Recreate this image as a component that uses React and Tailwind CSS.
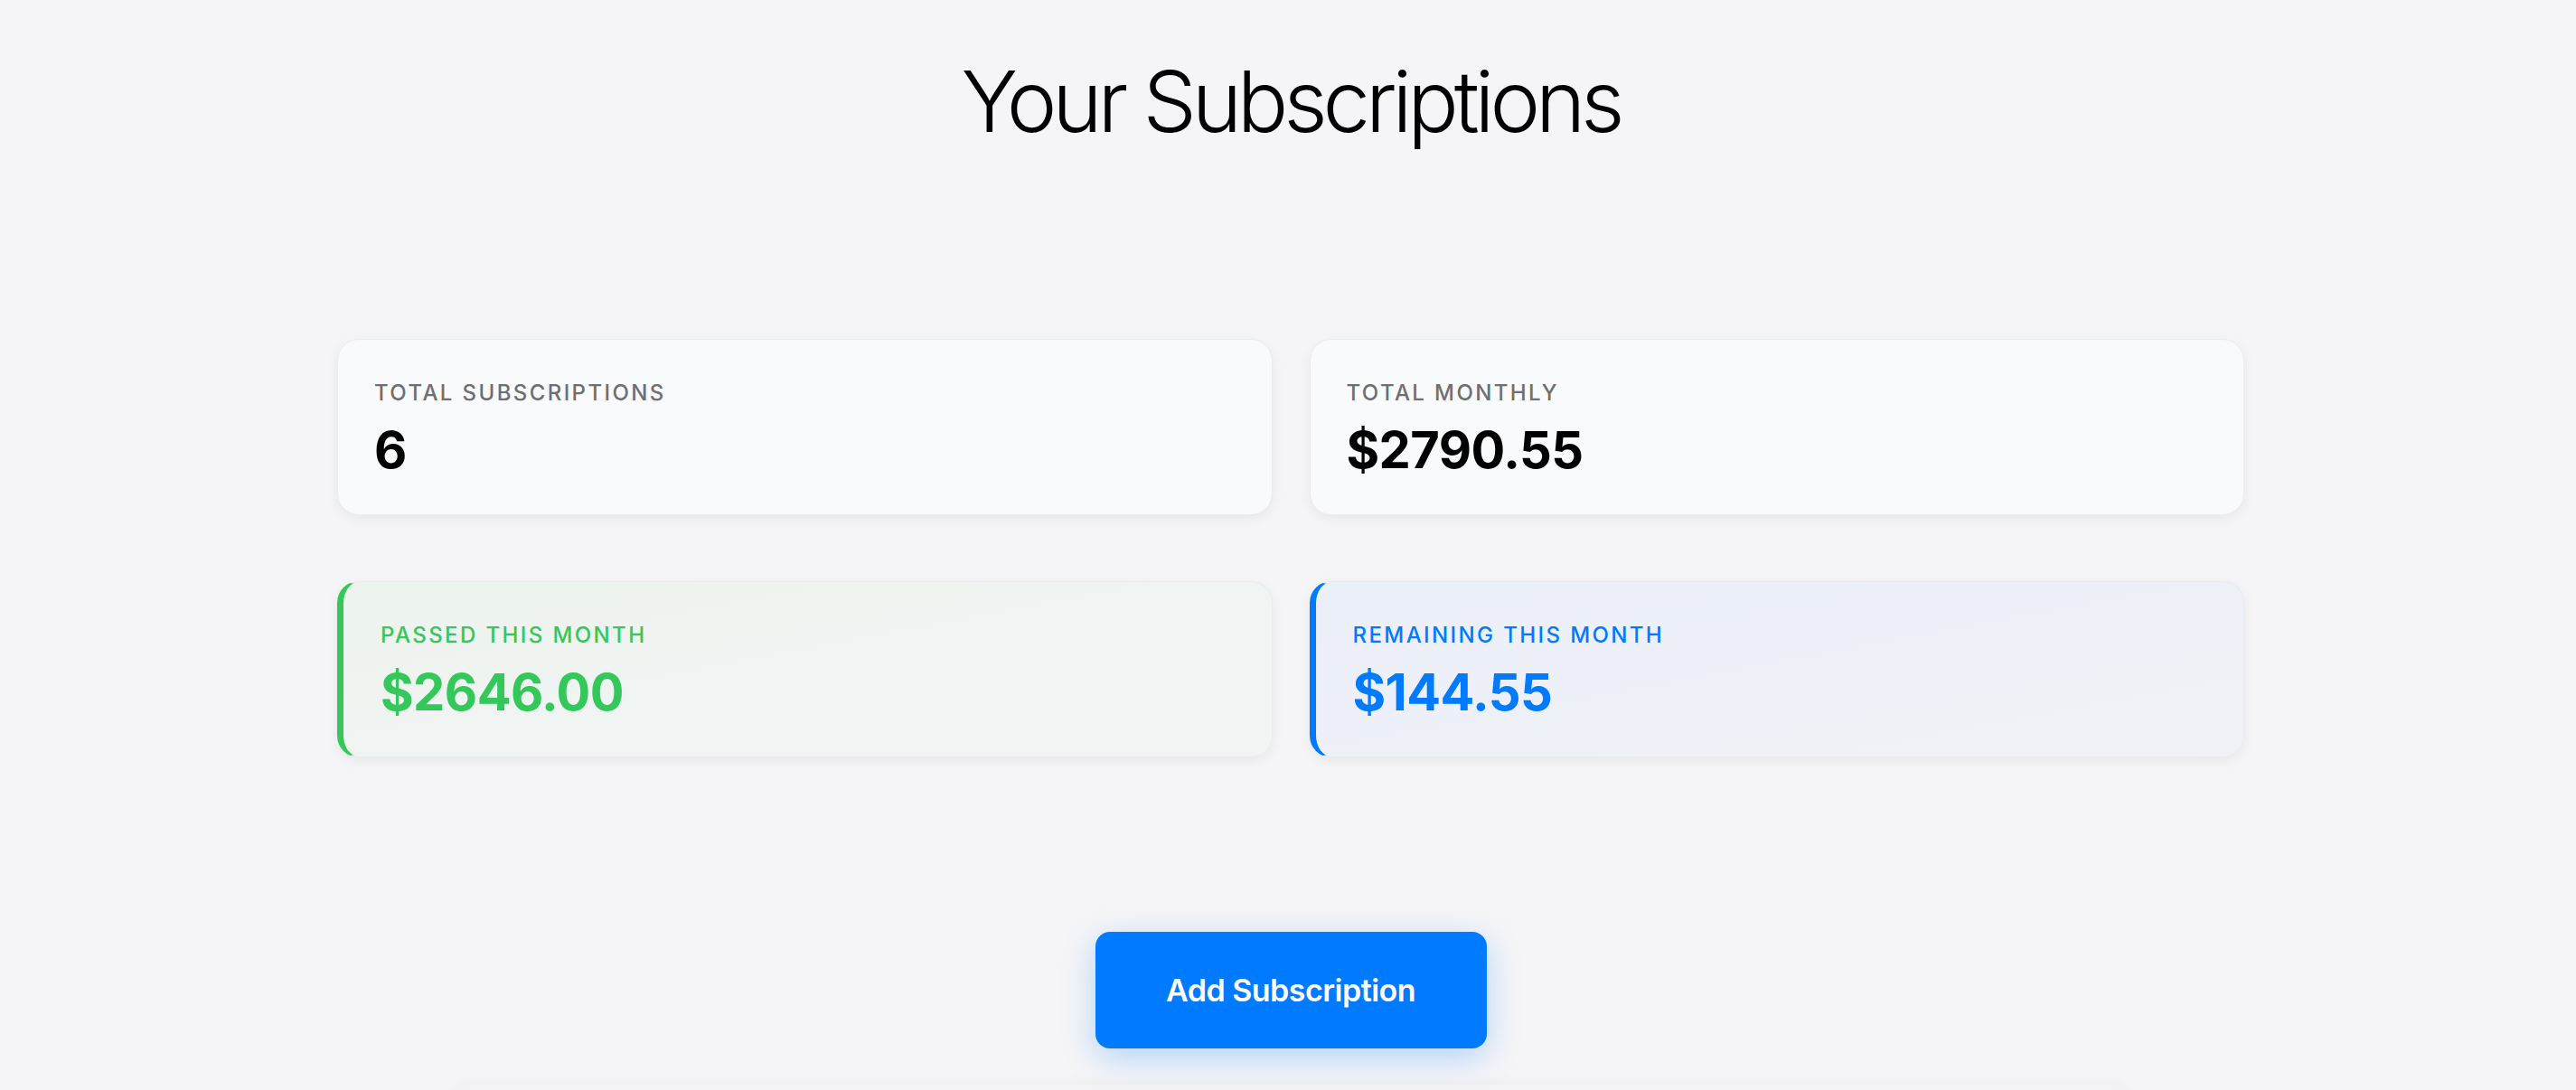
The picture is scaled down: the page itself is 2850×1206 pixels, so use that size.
import React from 'react';

const stats = [
  { label: 'Total Subscriptions', value: '6', tone: 'plain' },
  { label: 'Total Monthly', value: '$2790.55', tone: 'plain' },
  { label: 'Passed This Month', value: '$2646.00', tone: 'green' },
  { label: 'Remaining This Month', value: '$144.55', tone: 'blue' },
];

const toneStyles = {
  plain: {
    card: 'bg-[#f9fafb] border border-[#ececef] pl-10',
    label: 'text-[#6e6e73]',
    value: 'text-black',
  },
  green: {
    card: 'bg-gradient-to-br from-[#edf3ef] to-[#f2f4f4] border border-[#e9ecea] border-l-[7px] border-l-[#34c759] pl-[41px]',
    label: 'text-[#34c759]',
    value: 'text-[#34c759]',
  },
  blue: {
    card: 'bg-gradient-to-br from-[#ebeff9] to-[#f1f2f7] border border-[#e9eaef] border-l-[7px] border-l-[#007aff] pl-[41px]',
    label: 'text-[#007aff]',
    value: 'text-[#007aff]',
  },
};

function StatCard({ label, value, tone }) {
  const s = toneStyles[tone];
  return (
    <div className={`h-[195px] rounded-[24px] pt-[41px] pr-10 shadow-[0_4px_14px_rgba(0,0,0,0.06)] ${s.card}`}>
      <div className={`text-[24px] leading-[36px] font-medium uppercase tracking-[0.1em] ${s.label}`}>
        {label}
      </div>
      <div className={`mt-3 text-[56px] leading-[67px] font-bold tracking-[-0.01em] ${s.value}`}>
        {value}
      </div>
    </div>
  );
}

export default function App() {
  return (
    <div
      className="min-h-screen bg-[#f5f5f7] overflow-hidden pl-[6px]"
      style={{ fontFamily: 'Inter, "Noto Sans", sans-serif' }}
    >
      <h1 className="pt-[55px] text-center text-[94px] leading-[115px] font-light tracking-[-0.055em] text-black">
        Your Subscriptions
      </h1>

      <div className="mx-auto mt-[205px] w-[2110px] grid grid-cols-2 gap-x-[41px] gap-y-[73px]">
        {stats.map((s) => (
          <StatCard key={s.label} {...s} />
        ))}
      </div>

      <div className="mt-[193px] flex justify-center">
        <button className="w-[433px] h-[129px] rounded-[16px] bg-[#007aff] text-white text-[34px] font-semibold tracking-[-0.015em] shadow-[0_10px_36px_rgba(0,122,255,0.28)]">
          Add Subscription
        </button>
      </div>

      <div className="mx-auto mt-[40px] w-[1860px] h-[200px] rounded-[24px] bg-[#f3f3f5] shadow-[0_-4px_16px_rgba(0,0,0,0.03)]" />
    </div>
  );
}
